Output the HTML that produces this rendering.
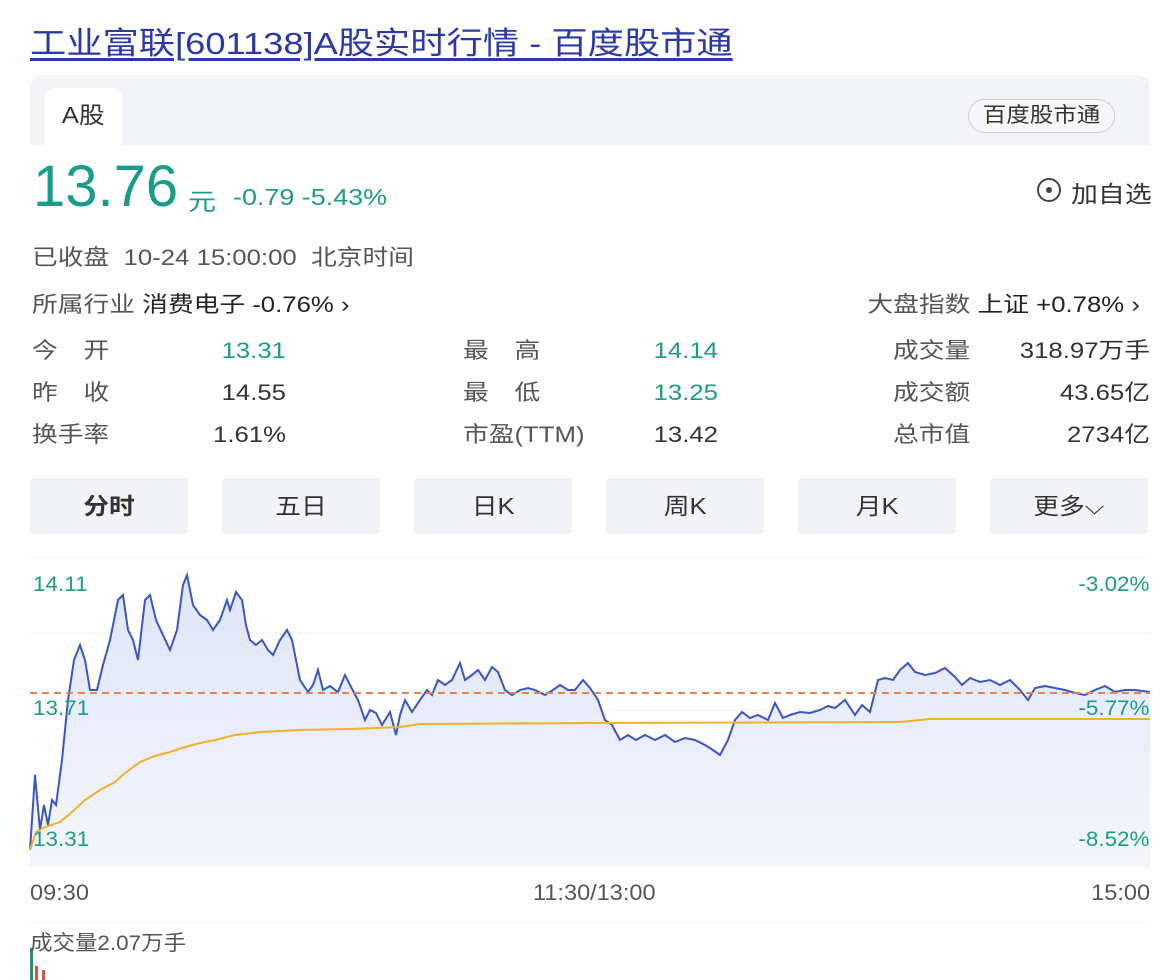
<!DOCTYPE html>
<html><head><meta charset="utf-8"><style>
*{margin:0;padding:0;box-sizing:border-box}
body{width:1170px;height:980px;background:#fff;font-family:"Liberation Sans","Noto Sans CJK SC",sans-serif;position:relative;overflow:hidden;color:#333}
.a{position:absolute;white-space:nowrap}
.g{color:#555}
.gr{color:#1a9c88}
.sl{transform:scaleX(1.17);transform-origin:0 50%}
.sr{transform:scaleX(1.17);transform-origin:100% 50%}
.tl{transform:scaleX(1.07);transform-origin:0 50%}
.tr{transform:scaleX(1.07);transform-origin:100% 50%}
.sc{display:inline-block;transform:scaleX(1.12)}
.btn{position:absolute;top:478px;height:56px;width:158px;background:#f2f3f6;border-radius:4px;font-size:23px;line-height:56px;text-align:center;color:#333}
</style></head><body>
<div class="a sl" style="left:30px;top:18px;font-size:31px;color:#2a38a8;text-decoration:underline;text-underline-offset:4px">工业富联[601138]A股实时行情 - 百度股市通</div>
<div class="a" style="left:30px;top:75px;width:1120px;height:70px;background:#f3f4f7;border-radius:12px 12px 0 0"></div>
<div class="a" style="left:45px;top:88px;width:77px;height:57px;background:#fff;border-radius:10px 10px 0 0;font-size:23px;line-height:54px;text-align:center"><span class="sc">A股</span></div>
<div class="a" style="left:968px;top:99px;width:147px;height:34px;border:1px solid #ccc;border-radius:17px;background:#f7f7f9;font-size:21px;line-height:32px;text-align:center"><span class="sc">百度股市通</span></div>
<div class="a gr" style="left:33px;top:152px;font-size:58px;line-height:70px">13.76</div>
<div class="a gr sl" style="left:188px;top:182px;font-size:24px">元</div>
<div class="a gr sl" style="left:233px;top:184px;font-size:23px">-0.79 -5.43%</div>
<div class="a" style="left:1037px;top:178px;width:24px;height:24px;border:2px solid #444;border-radius:50%"></div>
<div class="a" style="left:1046px;top:187px;width:6px;height:6px;background:#444;border-radius:50%"></div>
<div class="a sl" style="left:1071px;top:175px;font-size:23px">加自选</div>
<div class="a g sl" style="left:32px;top:240px;font-size:22px">已收盘&nbsp; 10-24 15:00:00&nbsp; 北京时间</div>
<div class="a g sl" style="left:32px;top:287px;font-size:22px">所属行业 <span style="color:#222">消费电子 -0.76% ›</span></div>
<div class="a g sr" style="right:30px;top:287px;font-size:22px">大盘指数 <span style="color:#222">上证 +0.78% ›</span></div>
<div class="a g sl" style="left:32px;top:330px;font-size:22px;line-height:42px">今　开<br>昨　收<br>换手率</div>
<div class="a sr" style="left:180px;top:330px;width:106px;text-align:right;font-size:22px;line-height:42px"><span class="gr">13.31</span><br>14.55<br>1.61%</div>
<div class="a g sl" style="left:463px;top:330px;font-size:22px;line-height:42px">最　高<br>最　低<br>市盈(TTM)</div>
<div class="a sr" style="left:610px;top:330px;width:108px;text-align:right;font-size:22px;line-height:42px"><span class="gr">14.14</span><br><span class="gr">13.25</span><br>13.42</div>
<div class="a g sl" style="left:893px;top:330px;font-size:22px;line-height:42px">成交量<br>成交额<br>总市值</div>
<div class="a sr" style="left:1000px;top:330px;width:150px;text-align:right;font-size:22px;line-height:42px">318.97万手<br>43.65亿<br>2734亿</div>
<div class="btn" style="left:30px;font-weight:bold"><span class="sc">分时</span></div>
<div class="btn" style="left:222px"><span class="sc">五日</span></div>
<div class="btn" style="left:414px"><span class="sc">日K</span></div>
<div class="btn" style="left:606px"><span class="sc">周K</span></div>
<div class="btn" style="left:798px"><span class="sc">月K</span></div>
<div class="btn" style="left:990px"><span class="sc">更多⌵</span></div>
<svg class="a" style="left:0;top:0" width="1170" height="980">
<g stroke="#eef0f4" stroke-width="1"><line x1="30" y1="557" x2="1150" y2="557"/><line x1="30" y1="633" x2="1150" y2="633"/><line x1="30" y1="710" x2="1150" y2="710"/><line x1="30" y1="788" x2="1150" y2="788"/><line x1="30" y1="866" x2="1150" y2="866"/><line x1="30" y1="923" x2="1150" y2="923"/></g>
<defs><linearGradient id="f" x1="0" y1="0" x2="0" y2="1"><stop offset="0" stop-color="#dfe4f7"/><stop offset="1" stop-color="#f5f6fc"/></linearGradient></defs>
<path fill="url(#f)" d="M30,866 L30,850 35,775 40,830 44,805 48,825 52,800 56,805 62,760 68,700 74,660 80,645 85,660 90,690 97,690 103,665 110,640 118,600 123,595 128,630 133,640 138,660 145,600 150,595 156,620 163,635 170,650 177,630 183,585 187,575 193,605 200,615 207,620 213,630 220,620 227,600 230,610 236,592 242,600 246,625 250,640 256,645 262,640 268,650 273,655 280,640 287,630 292,640 300,680 308,692 313,685 318,670 323,690 330,686 338,692 345,675 350,685 358,700 365,720 370,710 376,713 382,725 390,712 396,735 400,715 405,700 412,712 420,700 427,690 432,695 438,680 445,685 452,680 460,663 465,680 472,675 478,670 485,680 492,667 498,672 505,690 512,695 520,690 528,688 535,690 545,695 553,690 560,685 568,690 575,690 583,680 590,688 598,700 605,720 612,725 620,740 628,735 636,740 645,735 655,740 665,735 675,742 685,738 695,740 705,745 713,750 720,755 728,740 735,720 742,712 750,718 758,715 768,720 775,703 783,718 790,715 800,712 810,713 820,710 828,706 835,708 845,700 855,715 862,705 870,712 878,680 885,678 893,680 900,670 908,663 915,672 925,675 935,673 945,668 955,677 962,685 970,678 980,682 990,680 1000,685 1010,680 1020,690 1028,700 1035,688 1045,686 1055,688 1065,690 1075,693 1085,695 1095,690 1105,686 1115,692 1125,690 1135,690 1150,692 L1150,866 Z"/>
<polyline fill="none" stroke="#3a56c0" stroke-width="2" points="30,850 35,775 40,830 44,805 48,825 52,800 56,805 62,760 68,700 74,660 80,645 85,660 90,690 97,690 103,665 110,640 118,600 123,595 128,630 133,640 138,660 145,600 150,595 156,620 163,635 170,650 177,630 183,585 187,575 193,605 200,615 207,620 213,630 220,620 227,600 230,610 236,592 242,600 246,625 250,640 256,645 262,640 268,650 273,655 280,640 287,630 292,640 300,680 308,692 313,685 318,670 323,690 330,686 338,692 345,675 350,685 358,700 365,720 370,710 376,713 382,725 390,712 396,735 400,715 405,700 412,712 420,700 427,690 432,695 438,680 445,685 452,680 460,663 465,680 472,675 478,670 485,680 492,667 498,672 505,690 512,695 520,690 528,688 535,690 545,695 553,690 560,685 568,690 575,690 583,680 590,688 598,700 605,720 612,725 620,740 628,735 636,740 645,735 655,740 665,735 675,742 685,738 695,740 705,745 713,750 720,755 728,740 735,720 742,712 750,718 758,715 768,720 775,703 783,718 790,715 800,712 810,713 820,710 828,706 835,708 845,700 855,715 862,705 870,712 878,680 885,678 893,680 900,670 908,663 915,672 925,675 935,673 945,668 955,677 962,685 970,678 980,682 990,680 1000,685 1010,680 1020,690 1028,700 1035,688 1045,686 1055,688 1065,690 1075,693 1085,695 1095,690 1105,686 1115,692 1125,690 1135,690 1150,692"/>
<polyline fill="none" stroke="#f0b030" stroke-width="2" points="30,850 36,832 45,827 60,822 72,812 85,800 100,790 115,782 125,773 140,762 155,756 170,752 185,747 200,743 215,740 235,735 260,732 300,730 350,729 400,727 420,724 600,723 900,722 930,719 1150,719"/>
<line x1="30" y1="693" x2="1150" y2="693" stroke="#e8824f" stroke-width="2" stroke-dasharray="7,5"/>
<rect x="30" y="948" width="3" height="32" fill="#1a9c6a"/><rect x="35" y="966" width="3" height="14" fill="#e05040"/><rect x="42" y="970" width="3" height="10" fill="#e05040"/>
</svg>
<div class="a gr tl" style="left:33px;top:573px;font-size:21px">14.11</div>
<div class="a gr tl" style="left:33px;top:697px;font-size:21px">13.71</div>
<div class="a gr tl" style="left:33px;top:828px;font-size:21px">13.31</div>
<div class="a gr tr" style="right:20px;top:573px;font-size:21px">-3.02%</div>
<div class="a gr tr" style="right:20px;top:697px;font-size:21px">-5.77%</div>
<div class="a gr tr" style="right:20px;top:828px;font-size:21px">-8.52%</div>
<div class="a g tl" style="left:30px;top:880px;font-size:22px">09:30</div>
<div class="a g tl" style="left:533px;top:880px;font-size:22px">11:30/13:00</div>
<div class="a g tr" style="right:20px;top:880px;font-size:22px">15:00</div>
<div class="a g tl" style="left:30px;top:927px;font-size:21px">成交量2.07万手</div>
</body></html>
